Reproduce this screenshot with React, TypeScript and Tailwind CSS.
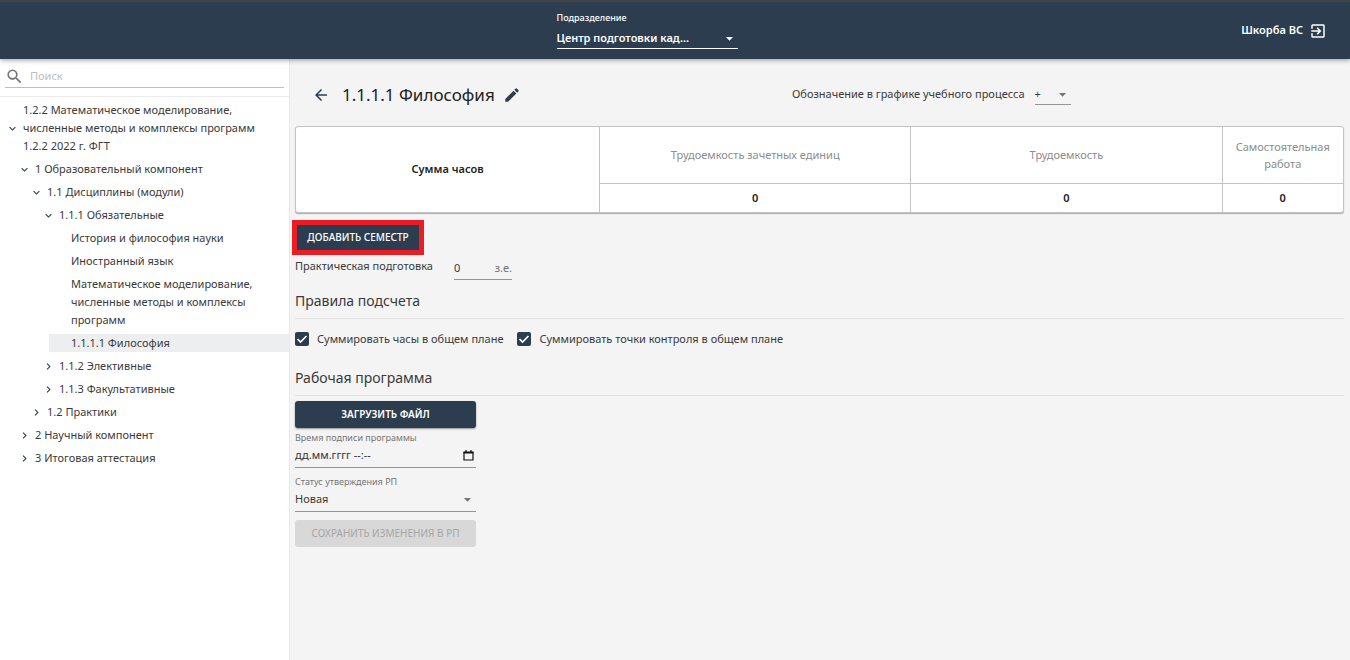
import { useState, type ReactNode } from "react";
import {
  MdArrowBack,
  MdArrowDropDown,
  MdChevronRight,
  MdEdit,
  MdExitToApp,
  MdExpandMore,
  MdSearch,
} from "react-icons/md";

type TreeNode = {
  title: string;
  open?: boolean;
  active?: boolean;
  children?: TreeNode[];
};

const tree: TreeNode[] = [
  {
    title:
      "1.2.2 Математическое моделирование, численные методы и комплексы программ 1.2.2 2022 г. ФГТ",
    open: true,
    children: [
      {
        title: "1 Образовательный компонент",
        open: true,
        children: [
          {
            title: "1.1 Дисциплины (модули)",
            open: true,
            children: [
              {
                title: "1.1.1 Обязательные",
                open: true,
                children: [
                  { title: "История и философия науки" },
                  { title: "Иностранный язык" },
                  {
                    title:
                      "Математическое моделирование, численные методы и комплексы программ",
                  },
                  { title: "1.1.1.1 Философия", active: true },
                ],
              },
              { title: "1.1.2 Элективные", children: [] },
              { title: "1.1.3 Факультативные", children: [] },
            ],
          },
          { title: "1.2 Практики", children: [] },
        ],
      },
      { title: "2 Научный компонент", children: [] },
      { title: "3 Итоговая аттестация", children: [] },
    ],
  },
];

function TreeItem({ node }: { node: TreeNode }) {
  const [open, setOpen] = useState(!!node.open);

  return (
    <li>
      <div className={node.active ? "flex items-center bg-[#edeef0]" : "flex items-center"}>
        {node.children ? (
          <button
            type="button"
            aria-label={open ? "Свернуть" : "Развернуть"}
            onClick={() => setOpen(!open)}
            className="flex w-[22px] shrink-0 justify-center text-[#2d3d50]"
          >
            {open ? <MdExpandMore size={13} /> : <MdChevronRight size={13} />}
          </button>
        ) : (
          <span className="w-[22px] shrink-0" />
        )}
        <a href="#" className="pr-6 leading-[18px]">
          {node.title}
        </a>
      </div>
      {open && node.children && node.children.length > 0 && (
        <ul className="mt-[5px] ml-3 flex flex-col gap-[5px]">
          {node.children.map((child) => (
            <TreeItem key={child.title} node={child} />
          ))}
        </ul>
      )}
    </li>
  );
}

function Checkbox({ id, label }: { id: string; label: string }) {
  return (
    <div className="flex items-center gap-2">
      <span className="grid size-[14px] place-items-center">
        <input
          id={id}
          type="checkbox"
          defaultChecked
          className="peer col-start-1 row-start-1 size-[14px] appearance-none rounded-xs border-2 border-[#2d3d50] checked:bg-[#2d3d50]"
        />
        <svg
          viewBox="0 0 14 14"
          className="pointer-events-none col-start-1 row-start-1 hidden size-[14px] peer-checked:block"
          fill="none"
          stroke="white"
          strokeWidth="1.6"
        >
          <path d="M2.5 7l3 3 6-6" />
        </svg>
      </span>
      <label htmlFor={id}>{label}</label>
    </div>
  );
}

function Section({ title, children }: { title: string; children: ReactNode }) {
  return (
    <section>
      <h2 className="border-b border-[#e0e0e0] pb-[7px] text-sm leading-5">{title}</h2>
      {children}
    </section>
  );
}

export default function App() {
  return (
    <div className="flex min-h-screen flex-col bg-[#f4f4f4] font-['Noto_Sans','Open_Sans',sans-serif] text-[11px] text-[#3a3a3a]">
      <header className="z-10 grid h-[59px] grid-cols-[1fr_237px_1fr] items-center border-t-2 border-[#414347] bg-[#2d3d50] text-white shadow-[0_1px_5px_rgba(0,0,0,0.4)]">
        <div />
        <div className="flex w-[181px] flex-col">
          <label htmlFor="department" className="text-[9px] leading-3 font-medium">
            Подразделение
          </label>
          <div className="mt-1 grid items-center border-b border-white">
            <select
              id="department"
              className="col-start-1 row-start-1 h-5 appearance-none bg-transparent font-semibold"
            >
              <option>Центр подготовки кад...</option>
            </select>
            <MdArrowDropDown
              size={17}
              className="pointer-events-none col-start-1 row-start-1 justify-self-end"
            />
          </div>
        </div>
        <div className="flex items-center justify-end gap-1.5 pr-[23px]">
          <span className="font-semibold">Шкорба ВС</span>
          <button type="button" aria-label="Выйти">
            <MdExitToApp size={18} />
          </button>
        </div>
      </header>

      <div className="flex flex-1">
        <aside className="w-[290px] shrink-0 border-r border-[#e8e8e8] bg-white">
          <div className="border-b border-[#ececec] px-[5px] pt-[7px] pb-2">
            <div className="flex h-[22px] items-center gap-1.5 border-b border-[#bdbdbd]">
              <MdSearch size={19} className="shrink-0 text-[#757575]" />
              <input
                type="search"
                aria-label="Поиск"
                placeholder="Поиск"
                className="w-full bg-transparent outline-none placeholder:text-[#bdbdbd]"
              />
            </div>
          </div>
          <ul className="pt-1 pl-px">
            {tree.map((node) => (
              <TreeItem key={node.title} node={node} />
            ))}
          </ul>
        </aside>

        <main className="min-w-0 flex-1 pr-1.5 pl-[5px]">
          <div className="flex h-[67px] items-center pt-1">
            <div className="flex w-[497px] items-center pl-[17px]">
              <button type="button" aria-label="Назад" className="text-[#2d3d50]">
                <MdArrowBack size={18} />
              </button>
              <h1 className="mr-2 ml-3 text-[17px] leading-6 text-[#212121]">1.1.1.1 Философия</h1>
              <button type="button" aria-label="Изменить" className="text-[#2d3d50]">
                <MdEdit size={18} />
              </button>
            </div>
            <label htmlFor="designation">Обозначение в графике учебного процесса</label>
            <div className="ml-2.5 grid w-9 items-center border-b border-[#949494]">
              <select
                id="designation"
                className="col-start-1 row-start-1 h-5 appearance-none bg-transparent"
              >
                <option>+</option>
              </select>
              <MdArrowDropDown
                size={17}
                className="pointer-events-none col-start-1 row-start-1 justify-self-end text-[#757575]"
              />
            </div>
          </div>

          <div className="overflow-hidden rounded-[3px] border border-[#c4c4c4] bg-white shadow-[0_1px_1px_rgba(0,0,0,0.3)]">
            <table className="w-full table-fixed text-center">
              <colgroup>
                <col className="w-[29%]" />
                <col />
                <col />
                <col className="w-[121px]" />
              </colgroup>
              <tbody>
                <tr className="h-14 text-[#8c8c8c]">
                  <th rowSpan={2} scope="row" className="font-semibold text-[#212121]">
                    Сумма часов
                  </th>
                  <th scope="col" className="border-b border-l border-[#c4c4c4] font-normal">
                    Трудоемкость зачетных единиц
                  </th>
                  <th scope="col" className="border-b border-l border-[#c4c4c4] font-normal">
                    Трудоемкость
                  </th>
                  <th scope="col" className="border-b border-l border-[#c4c4c4] leading-[17px] font-normal">
                    Самостоятельная работа
                  </th>
                </tr>
                <tr className="h-[29px] font-semibold text-[#212121]">
                  <td className="border-l border-[#c4c4c4]">0</td>
                  <td className="border-l border-[#c4c4c4]">0</td>
                  <td className="border-l border-[#c4c4c4]">0</td>
                </tr>
              </tbody>
            </table>
          </div>

          <button
            type="button"
            className="mt-3 ml-0.5 block h-[25px] w-[122px] bg-[#2d3d50] text-[10px] font-medium text-white outline-5 outline-[#ed1c24]"
          >
            ДОБАВИТЬ СЕМЕСТР
          </button>

          <div className="mt-[7px] flex items-center">
            <label htmlFor="practice" className="w-[159px] pb-1">
              Практическая подготовка
            </label>
            <div className="flex h-[23px] w-[58px] items-center border-b border-[#949494]">
              <input
                id="practice"
                type="text"
                defaultValue="0"
                className="w-full min-w-0 bg-transparent outline-none"
              />
              <span className="text-[#757575]">з.е.</span>
            </div>
          </div>

          <div className="mt-[11px]">
            <Section title="Правила подсчета">
              <div className="mt-3 flex h-4 items-center gap-[14px]">
                <Checkbox id="sum-hours" label="Суммировать часы в общем плане" />
                <Checkbox id="sum-points" label="Суммировать точки контроля в общем плане" />
              </div>
            </Section>
          </div>

          <div className="mt-[21px]">
            <Section title="Рабочая программа">
              <div className="mt-[5px] flex w-[181px] flex-col">
                <button
                  type="button"
                  className="h-[27px] rounded-[3px] bg-[#2d3d50] text-[10px] font-semibold text-white shadow-[0_1px_2px_rgba(0,0,0,0.4)]"
                >
                  ЗАГРУЗИТЬ ФАЙЛ
                </button>
                <label htmlFor="signed-at" className="mt-1 text-[9px] leading-3 text-[#757575]">
                  Время подписи программы
                </label>
                <div className="flex h-6 items-center border-b border-[#949494]">
                  <input
                    id="signed-at"
                    type="text"
                    placeholder="дд.мм.гггг --:--"
                    className="w-full min-w-0 bg-transparent outline-none placeholder:text-[#333]"
                  />
                  <button type="button" aria-label="Выбрать дату" className="px-0.5">
                    <svg viewBox="0 0 11 11" className="size-[11px]" fill="none" stroke="#111">
                      <path d="M1 2.5h9v7.5h-9z" strokeWidth="1.2" />
                      <path d="M.5 2.5h10" strokeWidth="2" />
                      <path d="M3 0v2M8 0v2" strokeWidth="1.2" />
                    </svg>
                  </button>
                </div>
                <label htmlFor="status" className="mt-2 text-[9px] leading-3 text-[#757575]">
                  Статус утверждения РП
                </label>
                <div className="grid h-6 items-center border-b border-[#949494]">
                  <select
                    id="status"
                    className="col-start-1 row-start-1 h-5 appearance-none bg-transparent"
                  >
                    <option>Новая</option>
                  </select>
                  <MdArrowDropDown
                    size={17}
                    className="pointer-events-none col-start-1 row-start-1 justify-self-end text-[#757575]"
                  />
                </div>
                <button
                  type="button"
                  disabled
                  className="mt-2 h-[27px] rounded-[3px] bg-[#d8d8d8] text-[10px] text-[#a6a6a6]"
                >
                  СОХРАНИТЬ ИЗМЕНЕНИЯ В РП
                </button>
              </div>
            </Section>
          </div>
        </main>
      </div>
    </div>
  );
}
